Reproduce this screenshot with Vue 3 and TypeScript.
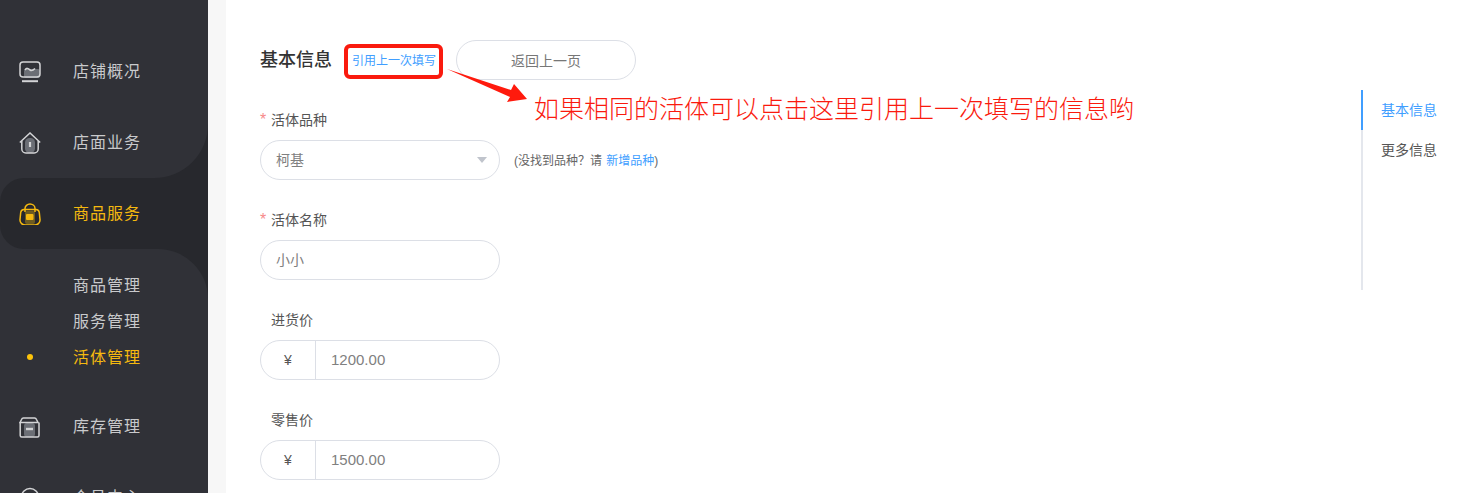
<script setup lang="ts">
interface SubItem {
  name: string
  active?: boolean
}

const subMenu: SubItem[] = [
  { name: '商品管理' },
  { name: '服务管理' },
  { name: '活体管理', active: true },
]

const priceFields = [
  { label: '进货价', value: '1200.00' },
  { label: '零售价', value: '1500.00' },
]
</script>

<template>
  <div class="layout">
    <aside class="sidebar">
      <div class="menu-top">
        <div class="menu-item">
          <svg class="menu-icon" viewBox="0 0 22 22" fill="none" stroke="#d3d4d6" stroke-width="1.5">
            <rect x="5" y="8" width="16" height="9" rx="2" fill="#6b6e75" stroke="none" />
            <rect x="1" y="1" width="20" height="15" rx="3" />
            <path d="M6 9c2-3 3.500-1 5 0s3 0.500 5-1.500" stroke-width="1.600" />
            <path d="M3 20.200h16" stroke-width="2" />
          </svg>
          <span>店铺概况</span>
        </div>
        <div class="menu-item round-bottom">
          <svg class="menu-icon" viewBox="0 0 22 22" fill="none" stroke="#d3d4d6" stroke-width="1.5">
            <rect x="6" y="6" width="10" height="15" rx="4.500" fill="#6b6e75" stroke="none" />
            <path d="M0.800 10.500l10.200-9.500 10.200 9.500" />
            <path d="M2.800 9v8a4 4 0 0 0 4 4h8.400a4 4 0 0 0 4-4v-8" />
            <path d="M11 10v5" stroke-width="2.200" />
          </svg>
          <span>店面业务</span>
        </div>
      </div>
      <div class="menu-item active">
        <svg class="menu-icon" viewBox="0 0 22 22" fill="none" stroke="#f5b90f" stroke-width="1.5">
          <rect x="6" y="8" width="10" height="13" rx="2" fill="#6e5c20" stroke="none" />
          <path d="M5 6.500h12a3.500 3.500 0 0 1 3.300 3l0.700 7a5 5 0 0 1-5 5.500h-10a5 5 0 0 1-5-5.500l0.700-7a3.500 3.500 0 0 1 3.300-3z" />
          <path d="M6 9v-3.500a5 4.500 0 0 1 10 0v3.500" />
          <rect x="7" y="11" width="7.500" height="6" rx="1" fill="#f5b90f" stroke="none" />
        </svg>
        <span>商品服务</span>
      </div>
      <div class="menu-rest">
        <ul class="submenu">
          <li v-for="item in subMenu" :key="item.name" :class="{ current: item.active }">{{ item.name }}</li>
        </ul>
        <div class="menu-item">
          <svg class="menu-icon" viewBox="0 0 22 22" fill="none" stroke="#d3d4d6" stroke-width="1.5">
            <rect x="5" y="7" width="11" height="14" rx="3" fill="#6b6e75" stroke="none" />
            <path d="M1 6.500l1.500-3a2.500 2.500 0 0 1 2-1.500h11a2.500 2.500 0 0 1 2 1.500l1.500 3z" />
            <path d="M1.200 6.500v13a1.500 1.500 0 0 0 1.500 1.500h15.800a1.500 1.500 0 0 0 1.500-1.500v-13" />
            <path d="M7 13h7" stroke-width="2.400" />
          </svg>
          <span>库存管理</span>
        </div>
        <div class="menu-item">
          <svg class="menu-icon" viewBox="0 0 22 22" fill="none" stroke="#d3d4d6" stroke-width="1.5">
            <circle cx="11" cy="10" r="8.500" />
          </svg>
          <span>会员中心</span>
        </div>
      </div>
    </aside>

    <main class="main">
      <div class="content">
        <div class="title-row">
          <h2 class="title">基本信息</h2>
          <a class="quote-link">引用上一次填写</a>
          <button class="back-btn" type="button">返回上一页</button>
        </div>

        <div class="form-item">
          <label class="form-label"><i class="star">*</i>活体品种</label>
          <div class="control-row">
            <div class="select">
              <span>柯基</span>
              <i class="caret"></i>
            </div>
            <span class="hint">(没找到品种？请 <a>新增品种</a>)</span>
          </div>
        </div>

        <div class="form-item">
          <label class="form-label"><i class="star">*</i>活体名称</label>
          <div class="input"><span>小小</span></div>
        </div>

        <div v-for="field in priceFields" :key="field.label" class="form-item">
          <label class="form-label">{{ field.label }}</label>
          <div class="price">
            <span class="price-unit">¥</span>
            <span class="price-value">{{ field.value }}</span>
          </div>
        </div>
      </div>

      <nav class="anchor">
        <a class="anchor-link on">基本信息</a>
        <a class="anchor-link">更多信息</a>
      </nav>

      <!-- annotation drawn over the page -->
      <svg class="note-arrow" width="90" height="40" viewBox="0 0 90 40">
        <polygon points="1,1 65,22 68,16 81,31 61,34 64,29" fill="#ff1a0d" />
      </svg>
      <div class="note-text">如果相同的活体可以点击这里引用上一次填写的信息哟</div>
    </main>
  </div>
</template>

<style scoped>
.layout {
  display: flex;
  height: 493px;
  overflow: hidden;
  background: #f7f7f7;
  font-family: "Liberation Sans", "Noto Sans CJK SC", sans-serif;
}

.sidebar {
  flex: none;
  width: 208px;
  background: #303137;
  color: #c9cacc;
  overflow: hidden;
}

.menu-top {
  position: relative;
  z-index: 1;
  padding-top: 36px;
  background: #303137;
  border-bottom-right-radius: 54px;
}

.menu-item {
  display: flex;
  align-items: center;
  height: 71px;
  padding-left: 19px;
  font-size: 16px;
  letter-spacing: 1px;
}

.menu-item span {
  padding-bottom: 4px;
}

.menu-icon {
  flex: none;
  width: 22px;
  height: 22px;
  margin-right: 32px;
}

.menu-item.active {
  position: relative;
  color: #f5b90f;
  background: #27282d;
  border-radius: 24px 0 0 24px;
}

.menu-item.active::before,
.menu-item.active::after {
  content: '';
  position: absolute;
  right: 0;
  width: 60px;
  height: 60px;
  background: #27282d;
}

.menu-item.active::before {
  top: -60px;
}

.menu-item.active::after {
  bottom: -60px;
}

.menu-rest {
  position: relative;
  z-index: 1;
  background: #303137;
  border-top-right-radius: 50px;
}

.submenu {
  margin: 0;
  padding: 19px 0 15px;
  list-style: none;
}

.submenu li {
  position: relative;
  height: 36px;
  padding-left: 73px;
  font-size: 16px;
  line-height: 36px;
  letter-spacing: 1px;
}

.submenu li.current {
  color: #f5b90f;
}

.submenu li.current::before {
  content: '';
  position: absolute;
  left: 27px;
  top: 14px;
  width: 6px;
  height: 6px;
  border-radius: 50%;
  background: #fcc30a;
}

.main {
  position: relative;
  display: flex;
  flex: 1;
  min-width: 0;
  margin-left: 18px;
  padding: 40px 0 0 34px;
  background: #fff;
}

.content {
  flex: 1;
  min-width: 0;
}

.title-row {
  display: flex;
  align-items: center;
  height: 40px;
  margin-bottom: 20px;
}

.title {
  margin: 0 20px 0 0;
  padding-bottom: 4px;
  font-size: 18px;
  font-weight: 500;
  color: #333;
}

.quote-link {
  position: relative;
  margin-right: 20px;
  padding-top: 2px;
  font-size: 12px;
  line-height: 18px;
  color: #409eff;
}

/* red frame from the annotation */
.quote-link::before {
  content: '';
  position: absolute;
  left: -8px;
  right: -7px;
  top: -6px;
  bottom: -9px;
  border: 4px solid #fa1a0e;
  border-radius: 6px;
}

.back-btn {
  width: 180px;
  height: 40px;
  padding: 0;
  border: 1px solid #dcdfe6;
  border-radius: 20px;
  background: #fff;
  font: inherit;
  font-size: 14px;
  color: #777;
}

.form-item {
  margin-bottom: 20px;
}

.form-label {
  display: block;
  height: 40px;
  padding-left: 11px;
  position: relative;
  font-size: 14px;
  line-height: 40px;
  color: #555;
}

.star {
  position: absolute;
  left: 0;
  top: 0;
  font-size: 16px;
  font-style: normal;
  color: #f78989;
}

.control-row {
  display: flex;
  align-items: center;
}

.select,
.input,
.price {
  box-sizing: border-box;
  display: flex;
  align-items: center;
  width: 240px;
  height: 40px;
  border: 1px solid #dcdfe6;
  border-radius: 20px;
  font-size: 14px;
  color: #808080;
}

.select,
.input {
  padding: 0 12px 0 15px;
}

.select span,
.input span {
  padding-bottom: 2px;
}

.select {
  justify-content: space-between;
}

.caret {
  width: 0;
  height: 0;
  border-left: 5px solid transparent;
  border-right: 5px solid transparent;
  border-top: 6px solid #c0c4cc;
}

.hint {
  margin-left: 14px;
  padding-bottom: 2px;
  font-size: 12px;
  color: #666;
}

.hint a {
  margin-left: 1px;
}

.hint a,
.anchor-link.on {
  color: #409eff;
}

.price-unit {
  flex: none;
  box-sizing: border-box;
  width: 55px;
  height: 38px;
  border-right: 1px solid #dcdfe6;
  line-height: 38px;
  text-align: center;
  color: #555;
}

.price-value {
  padding-left: 15px;
  padding-bottom: 2px;
  font-size: 15px;
}

.anchor {
  flex: none;
  box-sizing: border-box;
  width: 100px;
  height: 200px;
  margin-top: 50px;
  border-left: 2px solid #e4e7ed;
}

.anchor-link {
  display: block;
  position: relative;
  height: 40px;
  padding-left: 18px;
  font-size: 14px;
  line-height: 40px;
  color: #555;
}

.anchor-link.on::before {
  content: '';
  position: absolute;
  left: -2px;
  top: 0;
  width: 2px;
  height: 40px;
  background: #409eff;
}

.note-arrow {
  position: absolute;
  left: 220px;
  top: 68px;
}

.note-text {
  position: absolute;
  left: 308px;
  top: 91px;
  font-size: 25px;
  font-weight: 300;
  line-height: 36px;
  white-space: nowrap;
  color: #fa1a0e;
}
</style>
